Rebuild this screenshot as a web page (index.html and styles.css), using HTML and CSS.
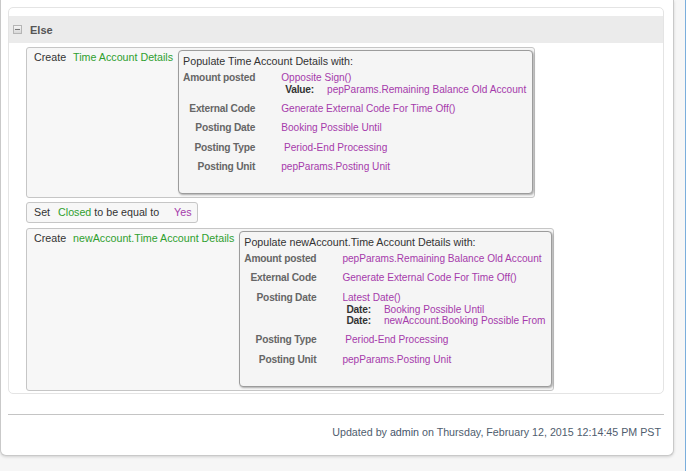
FILE: index.html
```html
<!DOCTYPE html>
<html lang="en">
<head>
  <meta charset="UTF-8">
  <title>Rule Details</title>
  <link rel="stylesheet" href="styles.css">
</head>
<body>
  <div class="card">
    <div class="panel">
      <div class="panel-head">
        <span class="toggle"></span>
        <span class="panel-title">Else</span>
      </div>
      <div class="panel-body">

        <div class="stmt">
          <span class="kw">Create</span>
          <span class="obj">Time Account Details</span>
          <div class="populate">
            <div class="pop-title">Populate Time Account Details with:</div>
            <table>
              <tr>
                <td class="field">Amount posted</td>
                <td class="val">
                  Opposite Sign()
                  <div class="arg"><span class="arg-key">Value:</span>pepParams.Remaining Balance Old Account</div>
                </td>
              </tr>
              <tr>
                <td class="field">External Code</td>
                <td class="val">Generate External Code For Time Off()</td>
              </tr>
              <tr>
                <td class="field">Posting Date</td>
                <td class="val">Booking Possible Until</td>
              </tr>
              <tr>
                <td class="field">Posting Type</td>
                <td class="val">&nbsp;Period-End Processing</td>
              </tr>
              <tr>
                <td class="field">Posting Unit</td>
                <td class="val">pepParams.Posting Unit</td>
              </tr>
            </table>
          </div>
        </div>

        <div class="stmt stmt-set">
          <span class="kw">Set</span>
          <span class="obj obj-set">Closed</span>
          <span class="kw kw-mid">to be equal to</span>
          <span class="lit">Yes</span>
        </div>

        <div class="stmt">
          <span class="kw">Create</span>
          <span class="obj">newAccount.Time Account Details</span>
          <div class="populate">
            <div class="pop-title">Populate newAccount.Time Account Details with:</div>
            <table>
              <tr>
                <td class="field">Amount posted</td>
                <td class="val">pepParams.Remaining Balance Old Account</td>
              </tr>
              <tr>
                <td class="field">External Code</td>
                <td class="val">Generate External Code For Time Off()</td>
              </tr>
              <tr>
                <td class="field">Posting Date</td>
                <td class="val">
                  Latest Date()
                  <div class="arg"><span class="arg-key">Date:</span>Booking Possible Until</div>
                  <div class="arg"><span class="arg-key">Date:</span>newAccount.Booking Possible From</div>
                </td>
              </tr>
              <tr>
                <td class="field">Posting Type</td>
                <td class="val">&nbsp;Period-End Processing</td>
              </tr>
              <tr>
                <td class="field">Posting Unit</td>
                <td class="val">pepParams.Posting Unit</td>
              </tr>
            </table>
          </div>
        </div>

      </div>
    </div>

    <div class="footer">
      Updated by <span class="who">admin</span> on Thursday, February 12, 2015 12:14:45 PM PST
    </div>
  </div>
</body>
</html>
```

FILE: styles.css
```css
html {
  height: 100%;
}

body {
  margin: 0;
  min-height: 100%;
  box-sizing: border-box;
  background: #f6f6f6;
  border-right: 1px solid #7aaedc;
  font-family: "Liberation Sans", Arial, sans-serif;
  font-size: 10.7px;
  color: #333;
}

.card {
  width: 674px;
  box-sizing: border-box;
  background: #fff;
  border: 1px solid #c9c9c9;
  border-top: none;
  border-radius: 0 0 6px 6px;
  box-shadow: 0 1px 3px rgba(0, 0, 0, 0.15);
  padding: 7px 9px 17px 7px;
}

/* collapsible "Else" branch */
.panel {
  border: 1px solid #e4e4e4;
  border-radius: 5px;
  padding: 8px 0 2px 0;
}

.panel-head {
  display: flex;
  align-items: center;
  height: 27px;
  background: #ebebeb;
  padding-left: 4px;
}

.toggle {
  position: relative;
  width: 7px;
  height: 7px;
  border: 1px solid #b5b5b5;
  background: linear-gradient(#f4f4f4, #d8d8d8);
  margin-right: 8px;
}

.toggle::after {
  content: "";
  position: absolute;
  left: 1px;
  right: 1px;
  top: 3px;
  height: 1px;
  background: #777;
}

.panel-title {
  font-weight: bold;
  font-size: 11px;
  color: #555;
}

.panel-body {
  display: flex;
  flex-direction: column;
  align-items: flex-start;
  padding: 4px 0 0 17px;
}

/* statement rows */
.stmt {
  display: flex;
  align-items: flex-start;
  background: #f7f7f7;
  border: 1px solid #c6c6c6;
  border-radius: 3px;
  padding: 2px 1px 3px 7px;
  line-height: 13px;
}

.stmt + .stmt {
  margin-top: 4px;
}

.stmt-set {
  padding: 2px 5px 3px 7px;
}

.stmt-set + .stmt {
  margin-top: 5px;
}

.kw {
  padding-top: 1px;
  color: #333;
}

.obj {
  padding-top: 1px;
  color: #2f9f2f;
  margin: 0 5px 0 7px;
}

.obj-set {
  margin: 0 3px 0 8px;
}

.kw-mid {
  margin-right: 15px;
}

.lit {
  padding-top: 1px;
  color: #a53aab;
}

/* populate details box */
.populate {
  background: #f5f5f5;
  border: 1px solid #9c9c9c;
  border-radius: 4px;
  box-shadow: 1px 1px 2px rgba(0, 0, 0, 0.3);
  padding: 4px 6px 16px 3px;
  line-height: 12px;
}

.pop-title {
  padding: 0 0 1px 1px;
  color: #333;
}

.populate table {
  border-collapse: collapse;
}

.populate td {
  padding: 3.75px 0;
  vertical-align: top;
}

.field {
  padding-left: 1px !important;
  text-align: right;
  white-space: nowrap;
  font-weight: bold;
  font-size: 10.2px;
  letter-spacing: -0.2px;
  color: #666;
}

.val {
  padding-left: 26px !important;
  font-size: 10.1px;
  color: #a53aab;
  white-space: nowrap;
}

.arg {
  padding-left: 4px;
  line-height: 11.5px;
}

.arg-key {
  font-weight: bold;
  font-size: 10.2px;
  letter-spacing: -0.2px;
  line-height: 1;
  color: #333;
  margin-right: 13px;
}

/* footer */
.footer {
  margin-top: 20px;
  border-top: 1px solid #c4c4c4;
  padding: 11px 3px 0 0;
  text-align: right;
  line-height: 12px;
  color: #4f5d6e;
}

.who {
  color: #44536a;
}
```
